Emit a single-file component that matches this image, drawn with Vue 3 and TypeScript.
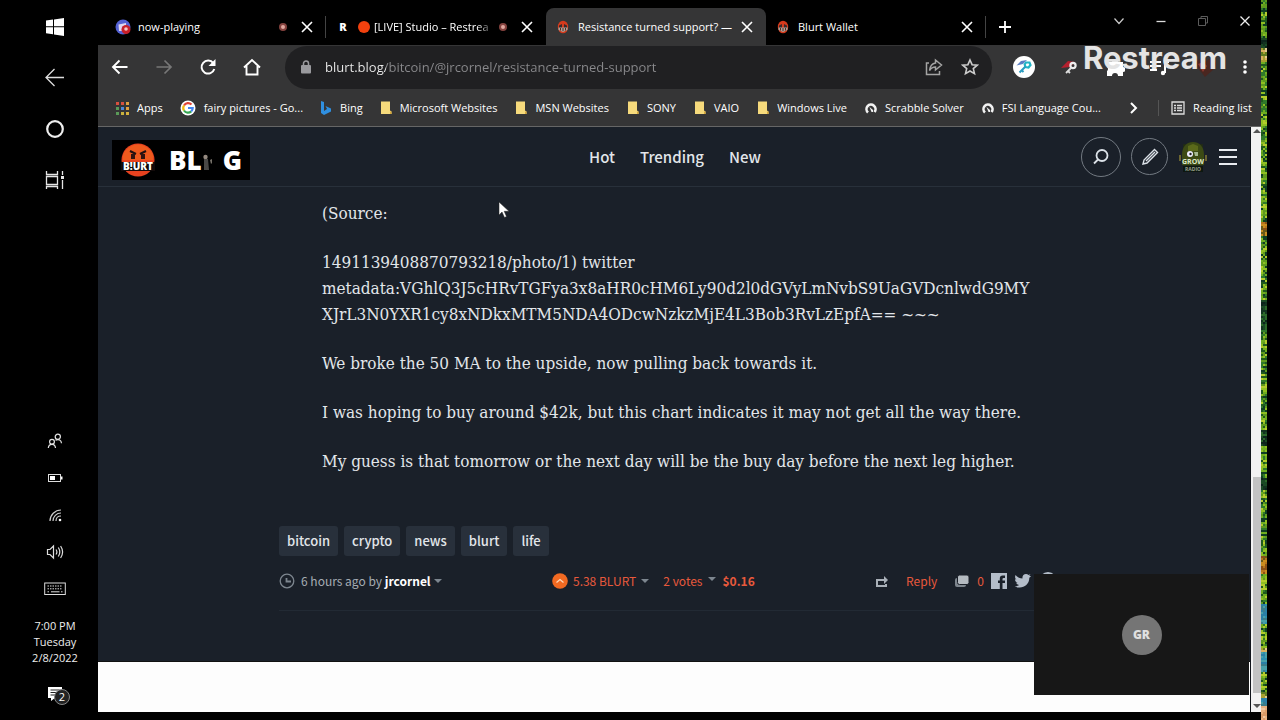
<script setup lang="ts">
import { ref } from 'vue'

interface Tab { title: string; icon: string; live?: boolean; active?: boolean; divider?: boolean; dot?: boolean }
interface Bookmark { label: string; icon: string }

const tabs: Tab[] = [
  { title: 'now-playing', icon: 'radio', live: true, divider: true },
  { title: '[LIVE] Studio – Restrea', icon: 'restream', live: true, dot: true },
  { title: 'Resistance turned support? —', icon: 'blurt', active: true },
  { title: 'Blurt Wallet', icon: 'blurt', divider: true },
]

const bookmarks: Bookmark[] = [
  { label: 'Apps', icon: 'apps' },
  { label: 'fairy pictures - Go...', icon: 'google' },
  { label: 'Bing', icon: 'bing' },
  { label: 'Microsoft Websites', icon: 'folder' },
  { label: 'MSN Websites', icon: 'folder' },
  { label: 'SONY', icon: 'folder' },
  { label: 'VAIO', icon: 'folder' },
  { label: 'Windows Live', icon: 'folder' },
  { label: 'Scrabble Solver', icon: 'globe' },
  { label: 'FSI Language Cou...', icon: 'globe' },
]

const appColors = ['#d8503f', '#d8503f', '#e0a040', '#5a9a58', '#4f86d9', '#e0a040', '#5a9a58', '#c9b23e', '#d8b23e']
const url = ref('blurt.blog/bitcoin/@jrcornel/resistance-turned-support')
const tags = ['bitcoin', 'crypto', 'news', 'blurt', 'life']

const palettes: Record<string, string[]> = {
  green: ['#5f9a1e', '#1f5a1c', '#8fbf22', '#0f3d22', '#b3cc2c', '#2f7a2a', '#6fae20'],
  dark: ['#12331f', '#1a4a24', '#0c241c', '#2c6a2a'],
  gold: ['#d8b060', '#a8a030', '#e0c890', '#5d7a20'],
  orange: ['#b8741c', '#8a5016', '#c98c20', '#6a5a18'],
  blue: ['#2c8fb0', '#2a7fa6', '#48a0a8', '#3b7d8a'],
  sand: ['#e6b080', '#d89a68', '#f0c8a0'],
}
const zones: [number, string][] = [
  [38, 'green'], [48, 'dark'], [62, 'gold'], [132, 'green'], [222, 'green'], [236, 'orange'], [300, 'green'],
  [330, 'dark'], [430, 'green'], [445, 'dark'], [478, 'green'], [490, 'dark'], [556, 'green'], [574, 'orange'],
  [604, 'green'], [624, 'blue'], [648, 'green'], [652, 'gold'], [672, 'blue'], [692, 'green'], [698, 'gold'],
  [706, 'blue'], [720, 'sand'],
]
interface Pixel { x: number; y: number; fill: string }
const noise: Pixel[] = []
let seed = 17
const random = (): number => {
  seed = (seed * 16807) % 2147483647
  return seed / 2147483647
}
for (let y = 0; y < 720; y += 2) {
  const zone = zones.find(([end]) => y < end)
  const palette = palettes[zone ? zone[1] : 'green']
  const row = Math.floor(random() * palette.length)
  for (let x = 0; x < 6; x += 2) {
    const index = random() < 0.5 ? row : Math.floor(random() * palette.length)
    noise.push({ x, y, fill: palette[index] })
  }
}
</script>

<template>
  <div class="desktop">
    <aside class="taskbar">
      <div class="task-group">
        <button aria-label="Start"><svg width="20" height="20" viewBox="0 0 20 20"><path fill="#fff" d="M1 3.5 8 2.6V9.300H1zM9 2.400 19 1v8.300H9zM1 10.300h7v6.900l-7-.9zM9 10.300h10V19L9 17.400z" /></svg></button>
        <button aria-label="Back"><svg width="20" height="20" viewBox="0 0 20 20" fill="none" stroke="#ddd" stroke-width="1.300"><path d="M1 9.500h18M9.500 1 1 9.500 9.500 18" /></svg></button>
        <button aria-label="Search"><svg width="20" height="20" viewBox="0 0 20 20"><circle cx="10" cy="10" r="7.800" fill="none" stroke="#eee" stroke-width="2.200" /></svg></button>
        <button aria-label="Task view"><svg width="20" height="20" viewBox="0 0 20 20" fill="none" stroke="#e4e4e4" stroke-width="1.300"><path d="M1.500 1v3.500h11V1M1.500 6.500h11v8h-11zM1.500 19v-2.500h11V19M17.500 1v4M17.500 10v9" /><path stroke-width="3" d="M16 7.500h3" /></svg></button>
      </div>
      <div class="tray">
        <button aria-label="People"><svg width="16" height="16" viewBox="0 0 16 16" fill="none" stroke="#e4e4e4" stroke-width="1.200"><circle cx="10.800" cy="3.800" r="2.600" /><circle cx="5" cy="8.800" r="2.400" /><path d="M1.300 15c.2-2.400 1.600-3.700 3.700-3.700S8.300 12.600 8.500 15M8.500 7.300c3.200-1.800 5.800 0 6 3" /></svg></button>
        <button aria-label="Battery"><svg width="16" height="16" viewBox="0 0 16 16"><rect x="1.500" y="4.500" width="12" height="7" fill="none" stroke="#ddd" /><path fill="#fff" d="M3 6h5v4H3zM14 6.500h1.500v3H14z" /></svg></button>
        <button aria-label="Wi-Fi"><svg width="16" height="16" viewBox="0 0 16 16" fill="none" stroke="#ccc" stroke-width="1.200"><path d="M3 14C3 8 8 3 14 3M6 14c0-4.500 3.500-8 8-8M9 14c0-3 2-5 5-5" /><circle cx="13" cy="13" r="1.300" fill="#fff" stroke="none" /></svg></button>
        <button aria-label="Volume"><svg width="18" height="16" viewBox="0 0 18 16" fill="none" stroke="#ddd" stroke-width="1.200"><path d="M1.500 5.500h2.500L7.500 2v12L4 10.500H1.500zM10 5.500q1.800 2.500 0 5M12.300 3.500q3 4.500 0 9M14.600 2q4 6 0 12" /></svg></button>
        <button aria-label="Keyboard"><svg width="22" height="14" viewBox="0 0 22 14" fill="none" stroke="#ddd"><rect x=".7" y="1" width="20.600" height="11.500" /><path stroke-dasharray="1.500 1" d="M3.500 4h15M3.500 6.800h15M3.500 9.800h2M17 9.800h2" /><path d="M7 9.800h8.500" /></svg></button>
        <div class="clock"><span>7:00 PM</span><span>Tuesday</span><span>2/8/2022</span></div>
        <button class="notice" aria-label="Notifications">
          <svg width="16" height="16" viewBox="0 0 16 16"><path fill="#fff" d="M1 0h14v11H8l-4 3v-3H1z" /><path stroke="#222" d="M3.500 3h9M3.500 5.500h9M3.500 8h6" /></svg>
          <span class="count">2</span>
        </button>
      </div>
    </aside>

    <main class="browser">
      <div class="tabstrip">
        <div v-for="tab in tabs" :key="tab.title" class="tab" :class="{ active: tab.active, divider: tab.divider }">
          <svg v-if="tab.icon === 'radio'" width="16" height="16" viewBox="0 0 16 16"><circle cx="8" cy="8" r="7.500" fill="#5462d4" /><path fill="#ddd5f0" d="M3.500 5.500 11 4v3l-4 1v4H4z" /><circle cx="11" cy="10.500" r="4.500" fill="#c81f28" /><circle cx="11" cy="10" r="1.800" fill="#f3c6c6" /></svg>
          <span v-else-if="tab.icon === 'restream'" class="r-icon">R</span>
          <svg v-else width="16" height="16" viewBox="0 0 16 16"><ellipse cx="8" cy="8" rx="5.200" ry="6.300" fill="#d53a1c" /><path fill="#3a2a2a" d="M4 6.500 7 5v5H4zM12 6.500 9 5v5h3z" /><path fill="#a8a29a" d="M3.500 8.500h9V11L8 13 3.500 11z" /><path stroke="#5a2a20" d="M5.500 9v2.500M8 9v3M10.500 9v2.500" /></svg>
          <span v-if="tab.dot" class="red-dot"></span>
          <button class="tab-title" :class="{ faded: tab.dot }">{{ tab.title }}</button>
          <span v-if="tab.live" class="live"></span>
          <button class="close" aria-label="Close tab"><svg width="12" height="12" viewBox="0 0 12 12" stroke="#fff" stroke-width="1.600"><path d="m1 1 10 10M11 1 1 11" /></svg></button>
        </div>
        <button class="new-tab" aria-label="New tab"><svg width="14" height="14" viewBox="0 0 14 14" stroke="#fff" stroke-width="1.800"><path d="M7 1v12M1 7h12" /></svg></button>
        <div class="window-controls">
          <button aria-label="Search tabs"><svg width="12" height="12" viewBox="0 0 12 12" fill="none" stroke="#ccc" stroke-width="1.200"><path d="m1.500 3.500 4.500 5 4.500-5" /></svg></button>
          <button aria-label="Minimize"><svg width="12" height="12" viewBox="0 0 12 12" stroke="#ddd" stroke-width="1.300"><path d="M1.500 6.500h9" /></svg></button>
          <button aria-label="Restore"><svg width="12" height="12" viewBox="0 0 12 12" fill="none" stroke="#5c5c5c"><path d="M1.500 3.500h7v7h-7zM4 3V1.500h6.500V8H9" /></svg></button>
          <button aria-label="Close"><svg width="12" height="12" viewBox="0 0 12 12" stroke="#eee" stroke-width="1.300"><path d="m1.500 1.500 9 9M10.500 1.500l-9 9" /></svg></button>
        </div>
      </div>

      <div class="toolbar">
        <div class="nav-buttons">
          <button aria-label="Back"><svg width="18" height="18" viewBox="0 0 18 18" fill="none" stroke="#fff" stroke-width="1.900"><path d="M2 9h14.500M8.500 2.500 2 9l6.500 6.500" /></svg></button>
          <button aria-label="Forward"><svg width="18" height="18" viewBox="0 0 18 18" fill="none" stroke="#777" stroke-width="1.700"><path d="M16 9H1.500M9.500 2.500 16 9l-6.500 6.500" /></svg></button>
          <button aria-label="Reload"><svg width="18" height="18" viewBox="0 0 18 18"><path d="M14.300 5.200A6.500 6.500 0 1 0 15.300 11" fill="none" stroke="#fff" stroke-width="2" /><path fill="#fff" d="M16.500 1v7H9.500z" /></svg></button>
          <button aria-label="Home"><svg width="18" height="18" viewBox="0 0 18 18" fill="none" stroke="#fff" stroke-width="1.900"><path d="M1 9.500 9 2l8 7.500M3.500 8v8.500h11V8" /></svg></button>
        </div>
        <div class="omnibox">
          <svg width="12" height="14" viewBox="0 0 12 14"><rect x="1" y="5" width="10" height="8.500" rx="1" fill="#9a9a9e" /><path d="M3.500 6V3.500a2.500 2.500 0 0 1 5 0V6" fill="none" stroke="#9a9a9e" stroke-width="1.500" /></svg>
          <input v-model="url" aria-label="Address" type="text" />
          <button aria-label="Share"><svg width="18" height="18" viewBox="0 0 18 18" fill="none" stroke="#a4a4a4" stroke-width="1.500"><path d="M4 5H1.500v11.500h13V13M10.500 2l6 5-6 5V9C8 9 6 10 4.500 12.500 5 8.500 7 5.500 10.500 5z" /></svg></button>
          <button aria-label="Bookmark"><svg width="18" height="18" viewBox="0 0 18 18" fill="none" stroke="#ccc" stroke-width="1.600"><path d="m9 2 2.100 4.700 5.100.5-3.900 3.400 1.200 5L9 13l-4.500 2.600 1.200-5L1.800 7.200l5.100-.5z" /></svg></button>
        </div>
        <div class="extensions">
          <button aria-label="Keychain"><svg width="24" height="24" viewBox="0 0 24 24"><circle cx="12" cy="12" r="11" fill="#fff" /><path d="M4.500 10.500 9 6l6-1-4 4z" fill="#5b7fc4" /><path fill="none" stroke="#22b4c6" stroke-width="2.200" d="M14 7.500h3.500l1 2.500-2 2.500-3-.5-.8-2.500z" /><path d="m13.500 11.500-6 6M9.500 15l2 2" stroke="#2a9cc0" stroke-width="2" /></svg></button>
          <button aria-label="Whalevault"><svg width="20" height="20" viewBox="0 0 20 20"><path d="m1 11 7-7 7 1-5 5z" fill="#b5202e" /><circle cx="13" cy="8.500" r="2.600" fill="none" stroke="#eee" stroke-width="2.200" /><path d="m11 11-5 5m2-2 2 2" stroke="#ddd" stroke-width="1.800" /></svg></button>
          <button aria-label="Extensions"><svg width="20" height="20" viewBox="0 0 20 20"><path fill="#fff" d="M2 5h5a3 3 0 0 1 6 0h5v5a2.500 2.500 0 0 1 0 5v4h-5a3 3 0 0 0-6 0H2v-5a2.500 2.500 0 0 0 0-4z" /></svg></button>
          <button aria-label="Media"><svg width="20" height="20" viewBox="0 0 20 20" fill="none" stroke="#fff" stroke-width="2"><path d="M1 5h11M1 9h11M1 13h7M16 16V5h4" /><circle cx="14" cy="16" r="2.200" fill="#fff" stroke="none" /></svg></button>
          <button aria-label="Profile"><svg width="24" height="24" viewBox="0 0 24 24"><path fill="#4a2620" d="M2 8c3-6 8-5 10-1 4-6 9-3 10 1 0 6-6 9-11 14C8 17 3 14 2 8z" /><path fill="#8c3a30" d="m4 9 5-2 4 4-4 6z" /></svg></button>
          <button aria-label="Menu"><svg width="6" height="18" viewBox="0 0 6 18" fill="#fff"><circle cx="3" cy="4" r="1.800" /><circle cx="3" cy="9" r="1.800" /><circle cx="3" cy="14" r="1.800" /></svg></button>
        </div>
        <span class="watermark">Restream</span>
      </div>

      <nav class="bookmarks" aria-label="Bookmarks">
        <a v-for="mark in bookmarks" :key="mark.label" href="#">
          <svg v-if="mark.icon === 'apps'" width="14" height="14" viewBox="0 0 14 14"><rect v-for="(color, i) in appColors" :key="i" :x="1 + (i % 3) * 5" :y="1 + Math.floor(i / 3) * 5" width="3" height="3" :fill="color" /></svg>
          <svg v-else-if="mark.icon === 'google'" width="16" height="16" viewBox="0 0 16 16" fill="none" stroke-width="2.200"><circle cx="8" cy="8" r="7.500" fill="#fff" /><path stroke="#e14436" d="M4 5.500a4.700 4.700 0 0 1 7.500-.9" /><path stroke="#f2b90c" d="M4 10.500a4.700 4.700 0 0 1 0-5" /><path stroke="#36a552" d="M11.200 11.400A4.700 4.700 0 0 1 4 10.500" /><path stroke="#4385f2" d="M8 8h4.700a4.700 4.700 0 0 1-1.500 3.400" /></svg>
          <svg v-else-if="mark.icon === 'bing'" width="12" height="16" viewBox="0 0 12 16"><path fill="#2f8fe0" d="m1 1 3 1v9l3-2-1.500-3L11 8.500v3L4 15l-3-2z" /></svg>
          <svg v-else-if="mark.icon === 'folder'" width="12" height="14" viewBox="0 0 12 14"><path fill="#f6da7c" d="M1 .5h9v9l1.500 1V13H1z" /><path fill="#d9a93a" d="M10 10.500h1.500V13H10z" /></svg>
          <svg v-else width="12" height="14" viewBox="0 0 12 14"><path fill="none" stroke="#f2f2f2" stroke-width="2.600" d="M3 11.500a4.500 4.500 0 1 1 6.500-.5" /><path fill="#f2f2f2" d="M4.500 6 8 9v2H6.500z" /></svg>
          <span>{{ mark.label }}</span>
        </a>
        <button class="more" aria-label="More bookmarks"><svg width="10" height="12" viewBox="0 0 10 12" fill="none" stroke="#fff" stroke-width="2"><path d="m2 1 5 5-5 5" /></svg></button>
        <button class="reading"><svg width="14" height="14" viewBox="0 0 14 14" fill="none" stroke="#ddd" stroke-width="1.300"><path d="M1 1h12v12H1zM3 4.500h2M6 4.500h5M3 7h2M6 7h5M3 9.500h2M6 9.500h5" /></svg><span>Reading list</span></button>
      </nav>

      <div class="viewport">
        <div class="page">
          <div class="dark">
            <header class="site-header">
              <a class="logo" href="#" aria-label="Blurt blog">
                <svg width="36" height="36" viewBox="0 0 36 36"><circle cx="18" cy="18" r="16.500" fill="#e8421f" /><path fill="#f26a1c" d="M3 13a16 16 0 0 1 30 0v5H3z" opacity=".6" /><path stroke="#201010" stroke-width="2" d="m10 9 6 3M26 9l-6 3" /><path fill="#301410" d="M11 12h4v5h-4zM21 12h4v5h-4z" /><path fill="#120a0a" d="M1 20h34v9H1z" /><text x="18" y="28" text-anchor="middle" class="logo-small">B!URT</text></svg>
                <span>BL</span>
                <svg width="12" height="24" viewBox="0 0 12 24"><circle cx="3.500" cy="9" r="2.200" fill="#958a80" /><path fill="#4a4846" d="M2 11h4l1 11H2z" /><path fill="#77726a" d="m8 12 2-1v4l-1 1z" /></svg>
                <span>G</span>
              </a>
              <nav class="site-nav"><a href="#">Hot</a><a href="#">Trending</a><a href="#">New</a></nav>
              <div class="actions">
                <button class="round large" aria-label="Search"><svg width="16" height="16" viewBox="0 0 16 16" fill="none" stroke="#dce2e8" stroke-width="1.800"><circle cx="9" cy="6.500" r="5.500" /><path d="m5 10.500-4 4" /></svg></button>
                <button class="round" aria-label="Write"><svg width="18" height="18" viewBox="0 0 18 18" fill="none" stroke="#dce2e8" stroke-width="1.400"><path d="m2 16 1-4L13.500 1.500l3 3L6 15zM5 13 14 4" /></svg></button>
                <button class="avatar" aria-label="Account"><svg width="30" height="32" viewBox="0 0 30 32"><path fill="#202a17" d="M5 3h20v24H5z" /><path fill="#3c4a14" d="M4 14C4 5 9 1 15 1s11 4 11 13v10H4z" /><path fill="#5b691a" d="M10 5 15 3l5 2v5H10z" /><path fill="#6b6530" d="M1 14h2v6H1zM27 14h2v6h-2z" /><circle cx="12" cy="13" r="3" fill="#eef" /><circle cx="12.500" cy="13" r="1.200" fill="#222" /><path fill="#a5b890" d="M16 11h4v4h-3z" /><path fill="#0d1710" d="M5 25h20v6H5z" /><text x="15" y="23" text-anchor="middle" class="avatar-a">GROW</text><text x="15" y="30" text-anchor="middle" class="avatar-b">RADIO</text></svg></button>
                <button aria-label="Site menu"><svg width="20" height="18" viewBox="0 0 20 18" stroke="#e8ebef" stroke-width="1.800"><path d="M1 2h18M1 9h18M1 16h18" /></svg></button>
              </div>
            </header>

            <article class="post">
              <div class="body">
                <p>(Source:</p>
                <p>1491139408870793218/photo/1) twitter<br />metadata:VGhlQ3J5cHRvTGFya3x8aHR0cHM6Ly90d2l0dGVyLmNvbS9UaGVDcnlwdG9MY<br />XJrL3N0YXR1cy8xNDkxMTM5NDA4ODcwNzkzMjE4L3Bob3RvLzEpfA== ~~~</p>
                <p>We broke the 50 MA to the upside, now pulling back towards it.</p>
                <p>I was hoping to buy around $42k, but this chart indicates it may not get all the way there.</p>
                <p>My guess is that tomorrow or the next day will be the buy day before the next leg higher.</p>
              </div>
              <div class="tags"><a v-for="tag in tags" :key="tag" href="#">{{ tag }}</a></div>
              <footer class="meta">
                <div class="by">
                  <svg width="16" height="16" viewBox="0 0 16 16" fill="none" stroke="#7d868f" stroke-width="1.300"><circle cx="8" cy="8" r="6.800" /><path stroke-width="1.800" d="M7.500 5v3.500H12" /></svg>
                  <span>6 hours ago by <a href="#">jrcornel</a></span><i class="caret"></i>
                </div>
                <div class="votes">
                  <button aria-label="Upvote"><svg width="16" height="16" viewBox="0 0 16 16"><circle cx="8" cy="8" r="7.800" fill="#f26a22" /><path fill="none" stroke="#ffd9b8" stroke-width="1.300" d="m4.500 9.500 3.500-3 3.500 3" /></svg></button>
                  <a class="blurt" href="#">5.38 BLURT</a><i class="caret"></i>
                  <a class="count-votes" href="#">2 votes</a><i class="caret raised"></i>
                  <strong>$0.16</strong>
                </div>
                <div class="share">
                  <button aria-label="Reblog"><svg width="14" height="14" viewBox="0 0 14 14" fill="#a9b0b8"><path d="M1 5h8V2l4 4-4 4V7H3v4h7v-1h2v3H1z" /></svg></button>
                  <a class="reply" href="#">Reply</a>
                  <svg width="16" height="14" viewBox="0 0 16 14"><rect x="1" y="4" width="11" height="9" rx="2" fill="#7d858d" /><rect x="3.500" y="1" width="11.500" height="9.500" rx="2" fill="#b4bac0" stroke="#1a1f28" /></svg>
                  <a class="replies" href="#">0</a>
                  <a href="#" aria-label="Facebook"><svg width="16" height="16" viewBox="0 0 16 16"><path fill="#b4bdc9" d="M0 0h16v16h-4.500v-6H14V7.500h-2.500V6q0-1 1.200-1H14V2.500h-2.300Q8.800 2.500 8.800 5.500v2H7V10h1.800v6H0z" /></svg></a>
                  <a href="#" aria-label="Twitter"><svg width="18" height="16" viewBox="0 0 18 16"><path fill="#b4bdc9" d="M17 3c-.5.8-1 1.300-1.700 1.700C15.500 11 10 15 5 14.500c-1.600 0-3-.4-4.300-1.200 1.800.1 3.300-.4 4.500-1.300-1.500-.1-2.600-1-3-2.300h1.400C2 9.200 1 8 1 6.200l1.500.4C1 5.500.7 3.700 1.600 2.100 3.400 4.200 5.700 5.400 8.500 5.600 8 3.200 9.600 1 12 1c1 0 1.800.4 2.500 1l2-.8-1.300 1.900z" /></svg></a>
                  <a href="#" aria-label="More"><svg width="18" height="20" viewBox="0 0 18 20"><circle cx="9" cy="10" r="9" fill="#b4bdc9" /></svg></a>
                </div>
              </footer>
            </article>
          </div>
          <div class="blank"></div>
        </div>
        <div class="scrollbar"><i class="up"></i><span class="thumb"></span><i class="down"></i></div>
        <div class="call"><span>GR</span></div>
        <svg class="cursor" width="12" height="18" viewBox="0 0 12 18"><path fill="#fff" stroke="#222" stroke-width=".5" d="M1 1v13l3-3 2.500 5.500 2-1L6.200 10.300H11z" /></svg>
      </div>
    </main>

    <svg class="noise" width="6" viewBox="0 0 6 720" preserveAspectRatio="none" shape-rendering="crispEdges"><rect v-for="(p, i) in noise" :key="i" :x="p.x" :y="p.y" width="2" height="2" :fill="p.fill" /></svg>
  </div>
</template>

<style>
body { margin: 0; background: #000; }
</style>

<style scoped>
* { box-sizing: border-box; }
button { display: flex; align-items: center; justify-content: center; padding: 0; border: 0; background: none; color: inherit; font: inherit; }
a { color: inherit; text-decoration: none; }
svg { flex: none; display: block; }
.desktop { display: flex; min-height: 100vh; padding-right: 13px; background: #000; font: 11px/16px "Open Sans", "Noto Sans", sans-serif; color: #fff; }
.taskbar { flex: none; width: 98px; padding: 17px 12px 17px 24px; display: flex; flex-direction: column; justify-content: space-between; align-items: center; }
.task-group { display: flex; flex-direction: column; gap: 31px; }
.task-group button { height: 20px; }
.tray { display: flex; flex-direction: column; align-items: center; gap: 21px; }
.tray button { height: 16px; }
.clock { display: flex; flex-direction: column; align-items: center; color: #eee; }
.notice { position: relative; }
.count { position: absolute; left: 7px; top: 2px; width: 16px; height: 16px; border: 1px solid #888; border-radius: 50%; background: #222; line-height: 14px; }
.browser { flex: 1; min-width: 0; margin-bottom: 8px; display: flex; flex-direction: column; }
.noise { align-self: stretch; height: 100vh; }

.tabstrip { display: flex; align-items: flex-end; height: 45px; padding-left: 8px; }
.tab { position: relative; flex: 0 1 220px; min-width: 0; height: 37px; display: flex; align-items: center; padding: 0 13px 0 9px; }
.tab.active { background: #353536; border-radius: 8px 8px 0 0; }
.tab.divider::after { content: ""; position: absolute; right: 0; top: 8px; height: 22px; width: 1px; background: #444; }
.tab-title { flex: 1; min-width: 0; justify-content: flex-start; margin: 0 4px 0 7px; white-space: nowrap; }
.faded { margin-left: 4px; mask-image: linear-gradient(90deg, #000 85%, transparent); }
.r-icon { width: 16px; text-align: center; font-weight: 800; }
.red-dot { flex: none; width: 12px; height: 12px; margin-left: 7px; border-radius: 50%; background: #f2410e; }
.live { flex: none; width: 8px; height: 8px; margin-right: 14px; border: 2px solid #84423e; border-radius: 50%; background: #e0a8a0; }
.new-tab { width: 38px; height: 37px; }
.window-controls { margin-left: auto; align-self: flex-start; display: flex; gap: 30px; padding: 15px 10px 0 0; }

.toolbar { position: relative; display: flex; align-items: center; height: 44px; background: #353536; }
.nav-buttons { display: flex; gap: 26px; padding: 0 24px 0 13px; }
.omnibox { flex: 1; min-width: 0; height: 43px; display: flex; align-items: center; gap: 18px; padding: 0 13px 0 15px; border-radius: 22px; background: #202022; }
.omnibox input { flex: 1; min-width: 0; margin-left: -5px; padding: 0; border: 0; outline: 0; color: transparent; background: linear-gradient(90deg, #f0f0f0 61px, #8a8a8d 61px); background-clip: text; font: 13px/20px "Open Sans", "Noto Sans", sans-serif; }
.extensions { flex: none; width: 269px; display: flex; align-items: center; justify-content: space-between; padding: 0 13px 0 20px; }
.watermark { position: absolute; right: 34px; top: -4px; font: 700 31px/34px Inter, sans-serif; color: #e4e4e4; }

.bookmarks { display: flex; align-items: center; height: 38px; gap: 17px; padding: 0 9px 0 17px; background: #353536; border-bottom: 1px solid #666; white-space: nowrap; }
.bookmarks a, .reading { flex: none; display: flex; align-items: center; gap: 8px; }
.bookmarks a:nth-child(n + 5) { margin-left: 1px; }
.more { margin-left: auto; width: 14px; }
.reading { border-left: 1px solid #555; height: 16px; padding-left: 12px; }

.viewport { position: relative; flex: 1; display: flex; }
.page { flex: 1; min-width: 0; display: flex; flex-direction: column; border-right: 1px solid #10141a; background: #fdfdfd; }
.dark { background: #1a2029; font-family: "Noto Sans CJK SC", "Noto Sans", sans-serif; color: #e2e6ea; border-bottom: 1px solid #111; }
.blank { flex: 1; min-height: 48px; }
.site-header { display: grid; grid-template-columns: 1fr auto 1fr; align-items: center; height: 60px; padding: 0 12px 0 14px; border-bottom: 1px solid #28303a; }
.logo { justify-self: start; display: flex; align-items: center; width: 138px; height: 40px; margin-top: 6px; padding-left: 8px; background: #000; color: #fff; font: 800 26px/30px "Open Sans", sans-serif; }
.logo > span:first-of-type { margin-left: 13px; }
.logo > span:last-child { margin-left: 9px; }
.logo-small { font: 800 10px "Open Sans", sans-serif; fill: #fff; }
.site-nav { display: flex; gap: 25px; font-size: 15px; line-height: 24px; font-weight: 500; }
.actions { justify-self: end; display: flex; align-items: center; gap: 10px; }
.round { width: 37px; height: 37px; border: 1px solid #737a82; border-radius: 50%; }
.round.large { width: 40px; height: 40px; }
.avatar-a { font: 700 7px "Open Sans", sans-serif; fill: #dde8c8; }
.avatar-b { font: 700 5px "Open Sans", sans-serif; fill: #99a08c; }

.post { width: 70%; max-width: 790px; margin: 0 auto; padding-bottom: 50px; }
.body { padding: 13px 43px 0; font: 17px/26px "DejaVu Serif Condensed", "DejaVu Serif", serif; white-space: nowrap; }
.body p { margin: 0 0 23px; }
.tags { display: flex; gap: 6px; margin-top: 52px; font-size: 13px; line-height: 30px; font-weight: 500; }
.tags a { padding: 0 8px; background: #28303b; border-radius: 3px; }
.meta { display: flex; align-items: center; justify-content: space-between; height: 55px; padding: 0 12px 4px 0; border-bottom: 1px solid #222a34; font-size: 12px; line-height: 20px; white-space: nowrap; }
.by, .votes, .share { display: flex; align-items: center; }
.by { gap: 6px; color: #a5acb3; }
.by a { color: #fff; font-weight: 700; }
.caret { width: 8px; border: 4px solid transparent; border-top-color: #7d868f; border-bottom: 0; }
.by .caret { margin-left: -3px; }
.votes { color: #e8593c; gap: 5px; margin-right: 10px; }
.count-votes { margin-left: 9px; }
.votes strong { margin-left: 2px; }
.raised { margin-bottom: 4px; }
.share { gap: 7px; }
.reply, .replies { color: #e8593c; }
.reply { margin: 0 10px; }

.scrollbar { width: 10px; display: flex; flex-direction: column; align-items: flex-end; justify-content: flex-end; background: #f2f2f2; }
.thumb { width: 8px; height: 37%; background: #c2c2c2; }
.up, .down { width: 8px; border: 4px solid transparent; }
.up { margin-bottom: auto; border-bottom-color: #555; border-top-width: 2px; }
.down { margin: 11px 0 4px; border-top-color: #555; border-bottom: 0; }
.call { position: absolute; right: 12px; bottom: 17px; width: 215px; height: 121px; display: flex; align-items: center; justify-content: center; background: #171717; }
.call span { width: 40px; height: 40px; border-radius: 50%; background: #757575; color: #e0e0e0; text-align: center; font: 800 12px/40px "Open Sans", sans-serif; }
.cursor { position: absolute; left: 400px; top: 74px; }
</style>
